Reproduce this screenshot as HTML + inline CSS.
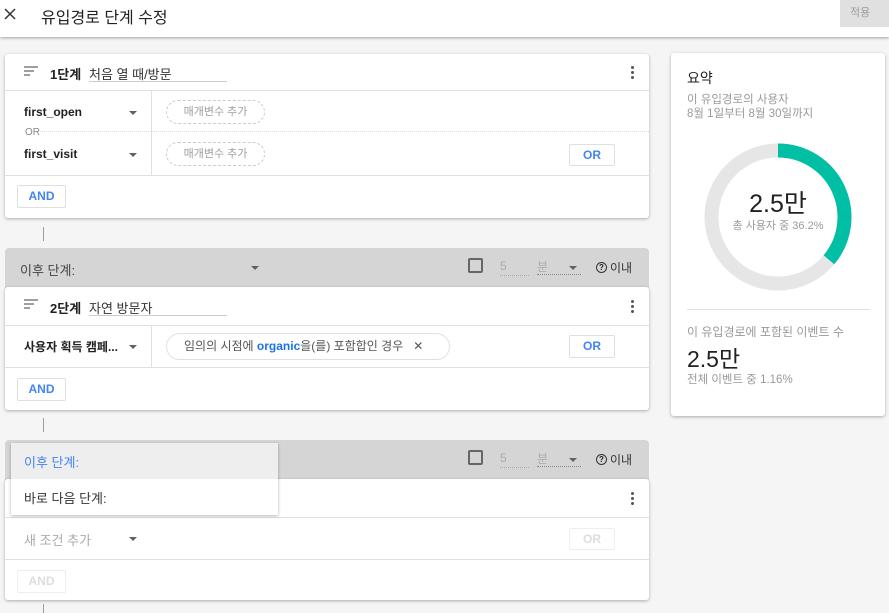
<!DOCTYPE html>
<html><head><meta charset="utf-8"><style>
*{box-sizing:border-box;margin:0;padding:0}
body{width:889px;height:613px;overflow:hidden;background:#f5f5f5;font-family:"Liberation Sans","Noto Sans CJK KR",sans-serif;color:#212121;position:relative}
.abs{position:absolute}
.hdr{left:0;top:0;width:889px;height:37px;background:#fff;box-shadow:0 1px 3px rgba(0,0,0,.35)}
.card{position:absolute;background:#fff;box-shadow:0 1px 3px rgba(0,0,0,.3);border-radius:3px}
.line{position:absolute;background:#e0e0e0}
.btn{position:absolute;border:1px solid #e0e0e0;border-radius:2px;color:#4285f4;font-size:12px;font-weight:bold;text-align:center;background:#fff}
.chip{position:absolute;border:1px dashed #ccc;border-radius:13px;font-size:11px;color:#9e9e9e;text-align:center;line-height:22px}
.t13{font-size:13px}
.tri{position:absolute;width:0;height:0;border-left:4px solid transparent;border-right:4px solid transparent;border-top:4px solid #616161}
.gray{position:absolute;background:#d5d5d5;border-radius:4px 4px 0 0}
.conn{position:absolute;left:43px;width:1px;background:#9e9e9e}
</style></head><body>
<div class="abs hdr"></div>
<svg class="abs" style="left:4px;top:8px" width="12" height="12"><path d="M1 1L11 11M11 1L1 11" stroke="#333" stroke-width="1.5"/></svg>
<div class="abs" style="left:41px;top:4px;font-size:16px;color:#222">유입경로 단계 수정</div>
<div class="abs" style="left:840px;top:0;width:49px;height:27px;background:#e0e0e0;color:#9e9e9e;font-size:11px;line-height:27px;padding-left:10px">적용</div>

<!-- card 1 -->
<div class="card" style="left:5px;top:54px;width:644px;height:164px"></div>
<svg class="abs" style="left:24px;top:66px" width="14" height="10"><path d="M0 1h14M0 5h10M0 9h6" stroke="#666" stroke-width="1.3"/></svg>
<div class="abs t13" style="left:50px;top:64px;font-weight:bold">1단계</div>
<div class="abs t13" style="left:89px;top:64px;width:138px;border-bottom:1px solid #ccc;height:18px;color:#333">처음 열 때/방문</div>
<div class="abs" style="left:631px;top:66px;width:3px"><div style="width:3px;height:3px;background:#555;border-radius:2px;margin-bottom:2px"></div><div style="width:3px;height:3px;background:#555;border-radius:2px;margin-bottom:2px"></div><div style="width:3px;height:3px;background:#555;border-radius:2px"></div></div>
<div class="line" style="left:5px;top:90px;width:644px;height:1px"></div>
<div class="line" style="left:151px;top:91px;width:1px;height:84px"></div>
<div class="line" style="left:5px;top:175px;width:644px;height:1px"></div>
<div class="abs" style="left:38px;top:131px;width:611px;border-top:1px dotted #ddd"></div>
<div class="abs" style="left:24px;top:105px;font-size:12px;font-weight:bold">first_open</div>
<div class="tri" style="left:129px;top:111px"></div>
<div class="abs" style="left:25px;top:127px;font-size:10px;color:#888">OR</div>
<div class="abs" style="left:24px;top:147px;font-size:12px;font-weight:bold">first_visit</div>
<div class="tri" style="left:129px;top:153px"></div>
<div class="chip" style="left:166px;top:100px;width:99px;height:24px">매개변수 추가</div>
<div class="chip" style="left:166px;top:142px;width:99px;height:24px">매개변수 추가</div>
<div class="btn" style="left:569px;top:144px;width:46px;height:22px;line-height:20px">OR</div>
<div class="btn" style="left:17px;top:185px;width:49px;height:23px;line-height:21px">AND</div>

<div class="conn" style="top:227px;height:14px"></div>

<!-- block 2 -->
<div class="gray" style="left:5px;top:248px;width:644px;height:42px"></div>
<div class="abs t13" style="left:20px;top:260px;color:#444">이후 단계:</div>
<div class="tri" style="left:251px;top:266px"></div>
<div class="abs" style="left:468px;top:258px;width:15px;height:15px;border:2px solid #666;border-radius:2px"></div>
<div class="abs" style="left:500px;top:259px;font-size:12px;color:#aaa;width:29px;border-bottom:1px dotted #aaa;height:17px">5</div>
<div class="abs" style="left:537px;top:258px;font-size:12px;color:#aaa;width:44px;border-bottom:1px dotted #888;height:17px">분</div>
<div class="tri" style="left:569px;top:266px"></div>
<div class="abs" style="left:596px;top:262px;width:11px;height:11px;border:1.3px solid #333;border-radius:50%;font-size:8px;text-align:center;line-height:9px;font-weight:bold">?</div>
<div class="abs" style="left:610px;top:259px;font-size:12px;color:#333">이내</div>

<div class="card" style="left:5px;top:287px;width:644px;height:123px"></div>
<svg class="abs" style="left:24px;top:299px" width="14" height="10"><path d="M0 1h14M0 5h10M0 9h6" stroke="#666" stroke-width="1.3"/></svg>
<div class="abs t13" style="left:50px;top:298px;font-weight:bold">2단계</div>
<div class="abs t13" style="left:89px;top:298px;width:138px;border-bottom:1px solid #ccc;height:18px;color:#333">자연 방문자</div>
<div class="abs" style="left:631px;top:300px;width:3px"><div style="width:3px;height:3px;background:#555;border-radius:2px;margin-bottom:2px"></div><div style="width:3px;height:3px;background:#555;border-radius:2px;margin-bottom:2px"></div><div style="width:3px;height:3px;background:#555;border-radius:2px"></div></div>
<div class="line" style="left:5px;top:325px;width:644px;height:1px"></div>
<div class="line" style="left:151px;top:326px;width:1px;height:41px"></div>
<div class="line" style="left:5px;top:367px;width:644px;height:1px"></div>
<div class="abs" style="left:24px;top:338px;font-size:12px;font-weight:bold">사용자 획득 캠페...</div>
<div class="tri" style="left:129px;top:345px"></div>
<div class="abs" style="left:166px;top:333px;width:284px;height:27px;border:1px solid #e0e0e0;border-radius:14px;font-size:12px;color:#555;line-height:25px;padding-left:17px">임의의 시점에 <b style="color:#1a73e8">organic</b>을(를) 포함합인 경우 &nbsp;&nbsp;✕</div>
<div class="btn" style="left:569px;top:335px;width:46px;height:23px;line-height:21px">OR</div>
<div class="btn" style="left:17px;top:378px;width:49px;height:23px;line-height:21px">AND</div>

<div class="conn" style="top:418px;height:14px"></div>

<!-- block 3 -->
<div class="gray" style="left:5px;top:440px;width:644px;height:42px"></div>
<div class="abs" style="left:468px;top:450px;width:15px;height:15px;border:2px solid #666;border-radius:2px"></div>
<div class="abs" style="left:500px;top:451px;font-size:12px;color:#aaa;width:29px;border-bottom:1px dotted #aaa;height:17px">5</div>
<div class="abs" style="left:537px;top:450px;font-size:12px;color:#aaa;width:44px;border-bottom:1px dotted #888;height:17px">분</div>
<div class="tri" style="left:569px;top:458px"></div>
<div class="abs" style="left:596px;top:454px;width:11px;height:11px;border:1.3px solid #333;border-radius:50%;font-size:8px;text-align:center;line-height:9px;font-weight:bold">?</div>
<div class="abs" style="left:610px;top:451px;font-size:12px;color:#333">이내</div>

<div class="card" style="left:5px;top:479px;width:644px;height:121px"></div>
<div class="abs" style="left:631px;top:492px;width:3px"><div style="width:3px;height:3px;background:#555;border-radius:2px;margin-bottom:2px"></div><div style="width:3px;height:3px;background:#555;border-radius:2px;margin-bottom:2px"></div><div style="width:3px;height:3px;background:#555;border-radius:2px"></div></div>
<div class="line" style="left:5px;top:517px;width:644px;height:1px"></div>
<div class="line" style="left:5px;top:559px;width:644px;height:1px"></div>
<div class="abs t13" style="left:24px;top:530px;color:#aaa">새 조건 추가</div>
<div class="tri" style="left:129px;top:537px"></div>
<div class="btn" style="left:569px;top:528px;width:46px;height:22px;line-height:20px;color:#ddd;border-color:#eee">OR</div>
<div class="btn" style="left:17px;top:570px;width:49px;height:23px;line-height:21px;color:#ddd;border-color:#eee">AND</div>
<div class="conn" style="top:604px;height:9px"></div>

<!-- dropdown -->
<div class="abs" style="left:11px;top:443px;width:267px;height:72px;background:#fff;box-shadow:0 1px 3px rgba(0,0,0,.3)"></div>
<div class="abs" style="left:11px;top:443px;width:267px;height:36px;background:#eee"></div>
<div class="abs t13" style="left:24px;top:452px;color:#4285f4">이후 단계:</div>
<div class="abs t13" style="left:24px;top:488px;color:#333">바로 다음 단계:</div>

<!-- summary -->
<div class="card" style="left:671px;top:53px;width:214px;height:363px"></div>
<div class="abs" style="left:687px;top:68px;font-size:14px">요약</div>
<div class="abs" style="left:687px;top:93px;font-size:11.5px;color:#999;line-height:14px">이 유입경로의 사용자<br>8월 1일부터 8월 30일까지</div>
<svg class="abs" style="left:704px;top:143px" width="148" height="148">
<circle cx="74" cy="74" r="66.5" fill="none" stroke="#e6e6e6" stroke-width="14"/>
<path d="M74 7.5 A66.5 66.5 0 0 1 124.9 116.8" fill="none" stroke="#00bfa5" stroke-width="14"/>
</svg>
<div class="abs" style="left:704px;top:184px;width:148px;text-align:center;font-size:25px">2.5만</div>
<div class="abs" style="left:704px;top:217px;width:148px;text-align:center;font-size:11px;color:#999">총 사용자 중 36.2%</div>
<div class="line" style="left:687px;top:309px;width:183px;height:1px"></div>
<div class="abs" style="left:687px;top:323px;font-size:12px;color:#999">이 유입경로에 포함된 이벤트 수</div>
<div class="abs" style="left:687px;top:340px;font-size:23px">2.5만</div>
<div class="abs" style="left:687px;top:371px;font-size:11.5px;color:#999">전체 이벤트 중 1.16%</div>
</body></html>
